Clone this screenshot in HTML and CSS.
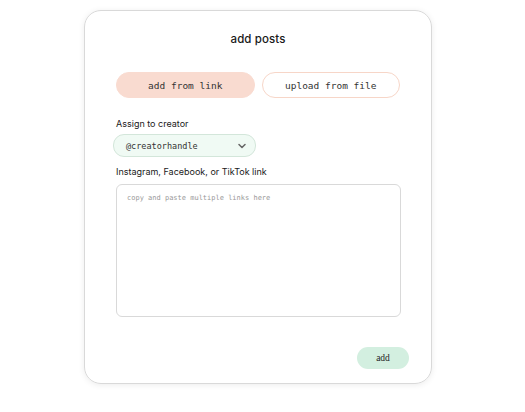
FILE: index.html
```html
<!DOCTYPE html>
<html>
<head>
<meta charset="utf-8">
<link rel="stylesheet" href="styles.css">
</head>
<body>
<div class="card">
  <h1 class="title">add posts</h1>
  <div class="tabs">
    <button class="tab tab-active">add from link</button>
    <button class="tab tab-outline">upload from file</button>
  </div>
  <label class="label">Assign to creator</label>
  <div class="select">
    <span>@creatorhandle</span>
    <svg class="chev" width="8" height="6" viewBox="0 0 8 6"><path d="M1 1.5 L4 4.5 L7 1.5" fill="none" stroke="#666" stroke-width="1.5" stroke-linecap="round" stroke-linejoin="round"/></svg>
  </div>
  <label class="label label2">Instagram, Facebook, or TikTok link</label>
  <div class="textarea">copy and paste multiple links here</div>
  <div class="footer">
    <button class="add">add</button>
  </div>
</div>
</body>
</html>
```
FILE: styles.css
```css
html, body { margin: 0; padding: 0; background: #fff; }
body { width: 525px; height: 412px; font-family: Inter, "Liberation Sans", sans-serif; }
.card {
  box-sizing: border-box;
  width: 348px;
  height: 374px;
  margin: 10px 0 0 84px;
  border: 1px solid #d9d9d9;
  border-radius: 17px;
  box-shadow: 0 1px 6px rgba(0,0,0,0.08);
  padding: 0 31px 0 31px;
  display: flex;
  flex-direction: column;
}
.title {
  margin: 21px 0 0 0;
  font-size: 11.5px;
  font-weight: 500;
  text-align: center;
  color: #1a1a1a;
  line-height: 14px;
  letter-spacing: 0.1px;
}
.tabs { display: flex; gap: 7px; margin-top: 26px; }
.tab {
  width: 139px;
  height: 26px;
  border-radius: 13px;
  font-family: "DejaVu Sans Mono", "Liberation Mono", monospace;
  font-size: 9.5px;
  color: #333;
  padding: 0;
  cursor: pointer;
}
.tab-active { background: #f9dbd0; border: 1px solid #f9dbd0; }
.tab-outline { background: #fff; border: 1px solid #f7d6c8; }
.label {
  display: block;
  margin-top: 20px;
  font-size: 9px;
  color: #1a1a1a;
  line-height: 11px;
}
.label2 { margin-top: 9px; }
.select {
  box-sizing: border-box;
  margin: 5px 0 0 -3px;
  width: 143px;
  height: 23px;
  border-radius: 11px;
  background: #f0faf4;
  border: 1px solid #d3e6da;
  display: flex;
  align-items: center;
  justify-content: space-between;
  padding: 0 9px 0 12px;
  font-family: "DejaVu Sans Mono", "Liberation Mono", monospace;
  font-size: 8.5px;
  color: #333;
}
.textarea {
  box-sizing: border-box;
  margin-top: 7px;
  width: 285px;
  height: 133px;
  border: 1px solid #d9d9d9;
  border-radius: 6px;
  padding: 8px 10px;
  font-family: "DejaVu Sans Mono", "Liberation Mono", monospace;
  font-size: 7px;
  color: #999;
  line-height: 10px;
}
.footer { display: flex; justify-content: flex-end; margin-top: 30px; margin-right: -9px; }
.add {
  width: 52px;
  height: 22px;
  border: none;
  border-radius: 11px;
  background: #d3efe0;
  font-family: "Liberation Serif", serif;
  font-size: 9.5px;
  color: #222;
  padding: 0;
}
```
